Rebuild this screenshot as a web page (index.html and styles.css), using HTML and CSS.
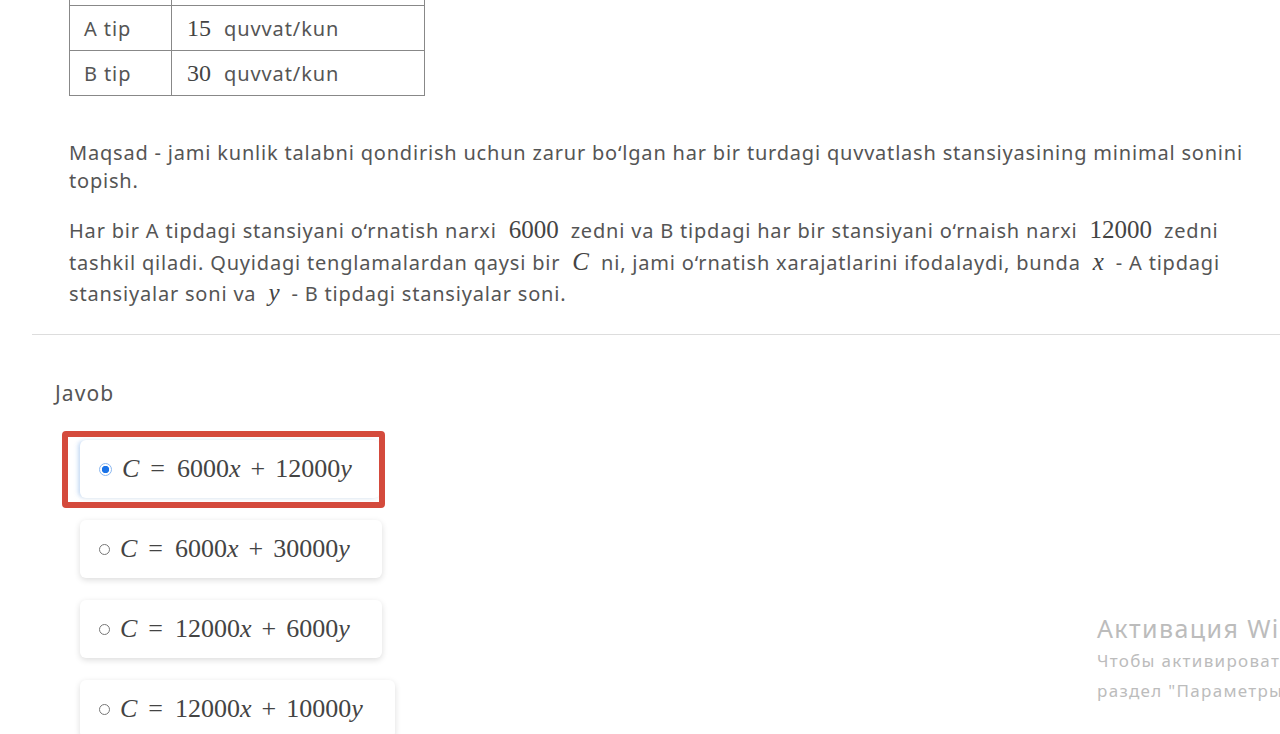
FILE: index.html
```html
<!DOCTYPE html>
<html lang="uz">
<head>
<meta charset="utf-8">
<title>Savol</title>
<link rel="stylesheet" href="styles.css">
</head>
<body>
<div class="page">
  <div class="question">
    <table class="data">
      <tr class="cut"><td class="c1"></td><td class="c2"></td></tr>
      <tr><td class="c1">A tip</td><td class="c2"><span class="tm">15</span>quvvat/kun</td></tr>
      <tr><td class="c1">B tip</td><td class="c2"><span class="tm">30</span>quvvat/kun</td></tr>
    </table>
    <p class="p1">Maqsad - jami kunlik talabni qondirish uchun zarur bo‘lgan har bir turdagi quvvatlash stansiyasining minimal sonini topish.</p>
    <p class="p2">Har bir A tipdagi stansiyani o‘rnatish narxi <span class="m">6000</span> zedni va B tipdagi har bir stansiyani o‘rnaish narxi <span class="m">12000</span> zedni tashkil qiladi. Quyidagi tenglamalardan qaysi bir <span class="m"><i>C</i></span> ni, jami o‘rnatish xarajatlarini ifodalaydi, bunda <span class="m"><i>x</i></span> - A tipdagi stansiyalar soni va <span class="m"><i>y</i></span> - B tipdagi stansiyalar soni.</p>
  </div>
  <hr class="sep">
  <div class="answer">
    <div class="label">Javob</div>
    <div class="options">
      <label class="opt sel"><span class="radio on"></span><span class="eq"><i>C</i><span class="rel">=</span>6000<i>x</i><span class="bin">+</span>12000<i>y</i></span></label>
      <label class="opt"><span class="radio"></span><span class="eq"><i>C</i><span class="rel">=</span>6000<i>x</i><span class="bin">+</span>30000<i>y</i></span></label>
      <label class="opt"><span class="radio"></span><span class="eq"><i>C</i><span class="rel">=</span>12000<i>x</i><span class="bin">+</span>6000<i>y</i></span></label>
      <label class="opt"><span class="radio"></span><span class="eq"><i>C</i><span class="rel">=</span>12000<i>x</i><span class="bin">+</span>10000<i>y</i></span></label>
    </div>
  </div>
  <div class="activation">
    <div class="act-title">Активация Windows</div>
    <div class="act-line">Чтобы активировать Windows, перейдите в</div>
    <div class="act-line">раздел "Параметры".</div>
  </div>
</div>
</body>
</html>
```
FILE: styles.css
```css
html, body {
  margin: 0;
  padding: 0;
  background: #fff;
  overflow: hidden;
}
body {
  width: 1280px;
  height: 734px;
  font-family: "Noto Sans", "Open Sans", sans-serif;
  color: #555;
}
.page {
  position: relative;
  width: 1280px;
  height: 734px;
  overflow: hidden;
}
.question {
  padding-left: 69px;
  padding-right: 28px;
}
.data {
  border-collapse: collapse;
  margin-top: -40px;
  font-size: 20px;
  letter-spacing: 0.9px;
  color: #555;
}
.data td {
  border: 1px solid #888;
  height: 44px;
  padding: 0 0 0 14px;
  vertical-align: middle;
}
.data .c1 { width: 87px; }
.data .c2 { width: 237px; padding-left: 15px; }
.tm {
  font-family: "Liberation Serif", "DejaVu Serif", serif;
  font-size: 24px;
  letter-spacing: 0;
  color: #444;
  margin-right: 13px;
}
.m {
  font-family: "Liberation Serif", "DejaVu Serif", serif;
  font-size: 25px;
  line-height: 20px;
  letter-spacing: 0;
  color: #444;
  padding: 0 6px;
}
.m i { font-style: italic; }
.p1 {
  margin: 43px 0 0;
  font-size: 20px;
  letter-spacing: 0.8px;
  line-height: 28px;
}
.p2 {
  margin: 20px 0 0;
  font-size: 20px;
  letter-spacing: 0.8px;
  line-height: 31.5px;
}
.sep {
  margin: 24px 0 0 32px;
  border: 0;
  border-top: 1px solid #ddd;
  height: 0;
}
.answer {
  padding-left: 55px;
}
.label {
  margin-top: 46px;
  font-size: 21px;
  letter-spacing: 1.1px;
  color: #555;
  line-height: 24px;
}
.options {
  margin-top: 35px;
  display: flex;
  flex-direction: column;
  gap: 22px;
  align-items: flex-start;
  padding-left: 25px;
}
.opt {
  position: relative;
  display: flex;
  align-items: center;
  gap: 10px;
  height: 58px;
  padding: 0 32px 0 19px;
  background: #fff;
  border-radius: 6px;
  box-shadow: 0 2px 6px rgba(0,0,0,0.14);
}
.opt.sel {
  padding-right: 28px;
  box-shadow: -3px 0 4px -1px rgba(100,160,235,0.35), 0 1px 4px rgba(0,0,0,0.05);
}
.opt.sel::after {
  content: "";
  position: absolute;
  left: -18px;
  top: -9px;
  right: -5px;
  bottom: -10px;
  border: 6px solid #d44a3c;
  border-radius: 4px;
  pointer-events: none;
}
.radio {
  flex: none;
  width: 11px;
  height: 11px;
  border: 1px solid #777;
  border-radius: 50%;
  box-sizing: border-box;
  margin-top: 2px;
}
.radio.on {
  border: 1px solid #8cb8f0;
  background: radial-gradient(circle, #1a73e8 0 3.4px, #fff 4px);
  width: 13px;
  height: 13px;
}
.eq {
  font-family: "Liberation Serif", "DejaVu Serif", serif;
  font-size: 26px;
  color: #444;
  white-space: nowrap;
}
.eq i { font-style: italic; }
.eq .rel { margin: 0 12px 0 11px; }
.eq .bin { margin: 0 10px; }
.activation {
  position: absolute;
  left: 1097px;
  top: 610px;
  white-space: nowrap;
  color: #bcbcbc;
  font-family: "Noto Sans", "Open Sans", sans-serif;
}
.act-title {
  font-size: 25px;
  letter-spacing: 1.4px;
  line-height: 36px;
}
.act-line {
  font-size: 17px;
  letter-spacing: 1.3px;
  line-height: 30px;
}
```
